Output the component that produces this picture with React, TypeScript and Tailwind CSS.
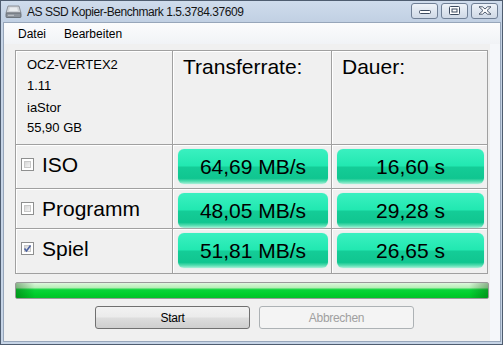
import React from "react";

const results = [
  { name: "ISO", rate: "64,69 MB/s", time: "16,60 s", checked: false, h: "h-[43px]" },
  { name: "Programm", rate: "48,05 MB/s", time: "29,28 s", checked: false, h: "h-[39px]" },
  { name: "Spiel", rate: "51,81 MB/s", time: "26,65 s", checked: true, h: "h-[44px]" },
];

const DriveIcon = () => (
  <svg width="17" height="15" viewBox="0 0 17 15">
    <path d="M3 2 L14 2 L16 9 L1 9 Z" fill="#cfd3d8" stroke="#7c8189" strokeWidth="0.8" />
    <path d="M5 3.5 L12 3.5 L13 7 L4 7 Z" fill="#e9ecef" />
    <rect x="1" y="9" width="15" height="4.5" rx="0.8" fill="#8d939b" stroke="#5d636b" strokeWidth="0.8" />
    <rect x="3" y="10.8" width="6" height="1" fill="#c4c8cd" />
  </svg>
);

const CaptionButton = ({ kind }: { kind: "min" | "max" | "close" }) => (
  <div className="w-[27px] h-[16px] rounded-[3px] border border-[#6f7f95] bg-gradient-to-b from-[#eef3f9] to-[#cfd9e6] flex items-center justify-center">
    {kind === "min" && (
      <svg width="12" height="6" viewBox="0 0 12 6">
        <rect x="0.5" y="2.5" width="11" height="3" rx="1" fill="#fff" stroke="#3c4a5e" />
      </svg>
    )}
    {kind === "max" && (
      <svg width="11" height="9" viewBox="0 0 11 9">
        <rect x="0.5" y="0.5" width="10" height="8" rx="1" fill="#fff" stroke="#3c4a5e" />
        <rect x="3" y="3" width="5" height="3" fill="none" stroke="#3c4a5e" />
      </svg>
    )}
    {kind === "close" && (
      <svg width="14" height="9" viewBox="0 0 14 9">
        <path
          d="M1 0.8 L4.5 0.8 L7 3 L9.5 0.8 L13 0.8 L9 4.5 L13 8.2 L9.5 8.2 L7 6 L4.5 8.2 L1 8.2 L5 4.5 Z"
          fill="#fff"
          stroke="#3c4a5e"
          strokeWidth="0.9"
          strokeLinejoin="round"
        />
      </svg>
    )}
  </div>
);

const CheckBox = ({ checked }: { checked: boolean }) => (
  <div className="w-[13px] h-[13px] mt-[12px] border border-[#8e8f8f] bg-white p-[2px] shrink-0">
    <div className="w-full h-full bg-gradient-to-br from-[#d7d7d7] to-[#f4f4f4] border border-[#c8c8c8] flex items-center justify-center">
      {checked && (
        <svg width="9" height="9" viewBox="0 0 9 9" className="-m-[2px]">
          <path d="M1.5 4.5 L3.5 7 L7.5 1.5" fill="none" stroke="#4d62a0" strokeWidth="1.6" />
        </svg>
      )}
    </div>
  </div>
);

const GreenBox = ({ value }: { value: string }) => (
  <div className="w-full h-[35px] mt-[3px] rounded-[6px] bg-[linear-gradient(to_bottom,#3af0c0_0%,#22e8b1_48%,#14cc97_52%,#10c690_84%,#4fdcae_92%,#a9f1d8_100%)] shadow-[0_0_1px_#9fead0] flex items-center justify-center text-[21px] leading-[21px] text-black">
    {value}
  </div>
);

export default function App() {
  return (
    <div
      className="w-[503px] h-[345px] flex flex-col bg-[#c6d4e6] border border-[#4f5d70] overflow-hidden"
      style={{ fontFamily: '"Liberation Sans", Arial, sans-serif' }}
    >
      {/* title bar */}
      <div className="h-[21px] flex items-center bg-gradient-to-b from-[#cfdcec] to-[#c1d0e3] pl-[4px] pr-[4px]">
        <DriveIcon />
        <span className="ml-[5px] text-[12px] tracking-[-0.45px] text-[#141414]">AS SSD Kopier-Benchmark 1.5.3784.37609</span>
        <div className="ml-auto flex gap-[3px] mt-[-2px]">
          <CaptionButton kind="min" />
          <CaptionButton kind="max" />
          <CaptionButton kind="close" />
        </div>
      </div>

      {/* client */}
      <div className="flex-1 ml-[2px] mr-[1px] mb-[2px] border border-[#97a6ba] flex flex-col bg-[#f0f0f0]">
        <div className="h-[21px] flex items-center gap-[18px] pl-[14px] bg-gradient-to-b from-[#fbfcfd] to-[#f1f3f6] text-[12px] text-black">
          <span>Datei</span>
          <span>Bearbeiten</span>
        </div>

        <div className="flex-1 flex">
          <div className="w-[486px] pl-[11px] pt-[6px] flex flex-col">
            {/* table */}
            <div className="w-[473px] bg-[#a0a0a0] p-px grid grid-cols-[156px_158px_155px] gap-px">
              <div className="h-[93px] bg-[#f0f0f0] border-l border-t border-white pl-[10px] pt-[6px] text-[13px] leading-[13px] text-black">
                <div className="h-[21px]">OCZ-VERTEX2</div>
                <div className="h-[22px]">1.11</div>
                <div className="h-[20px]">iaStor</div>
                <div>55,90 GB</div>
              </div>
              <div className="bg-[#f0f0f0] border-l border-t border-white pl-[9px] pt-[4px] text-[21px] leading-[21px]">Transferrate:</div>
              <div className="bg-[#f0f0f0] border-l border-t border-white pl-[9px] pt-[4px] text-[21px] leading-[21px]">Dauer:</div>

              {results.map((r) => (
                <React.Fragment key={r.name}>
                  <div className={`${r.h} bg-[#f0f0f0] border-l border-t border-white flex items-start pl-[4px] gap-[8px]`}>
                    <CheckBox checked={r.checked} />
                    <span className="mt-[8px] text-[21px] leading-[21px] text-black">{r.name}</span>
                  </div>
                  <div className="bg-[#f0f0f0] border-l border-t border-white flex items-start pl-[4px] pr-[3px]">
                    <GreenBox value={r.rate} />
                  </div>
                  <div className="bg-[#f0f0f0] border-l border-t border-white flex items-start pl-[4px] pr-[3px]">
                    <GreenBox value={r.time} />
                  </div>
                </React.Fragment>
              ))}
            </div>

            {/* progress */}
            <div className="mt-[8px] w-[474px] h-[17px] rounded-[2px] border border-[#9a9a9a] overflow-hidden relative bg-[linear-gradient(to_bottom,#dff7df_0%,#b7eeb7_30%,#0bd43a_45%,#00ce2c_75%,#04c22a_100%)]">
              <div className="absolute inset-0 bg-[linear-gradient(to_right,rgba(0,60,0,0.35)_0%,rgba(0,60,0,0)_4%,rgba(0,60,0,0)_96%,rgba(0,60,0,0.35)_100%)]" />
            </div>

            {/* buttons */}
            <div className="mt-[7px] flex gap-[9px] pl-[80px]">
              <button className="w-[155px] h-[23px] rounded-[3px] border border-[#707070] bg-[linear-gradient(to_bottom,#f2f2f2_0%,#ebebeb_48%,#dddddd_52%,#cfcfcf_100%)] text-[12px] tracking-[-0.3px] text-black">
                Start
              </button>
              <button className="w-[155px] h-[23px] rounded-[3px] border border-[#adb2b5] bg-[#f4f4f4] text-[12px] tracking-[-0.3px] text-[#a0a0a0]">
                Abbrechen
              </button>
            </div>
          </div>
          <div className="flex-1 bg-[#f5f7fa]" />
        </div>
      </div>
    </div>
  );
}
